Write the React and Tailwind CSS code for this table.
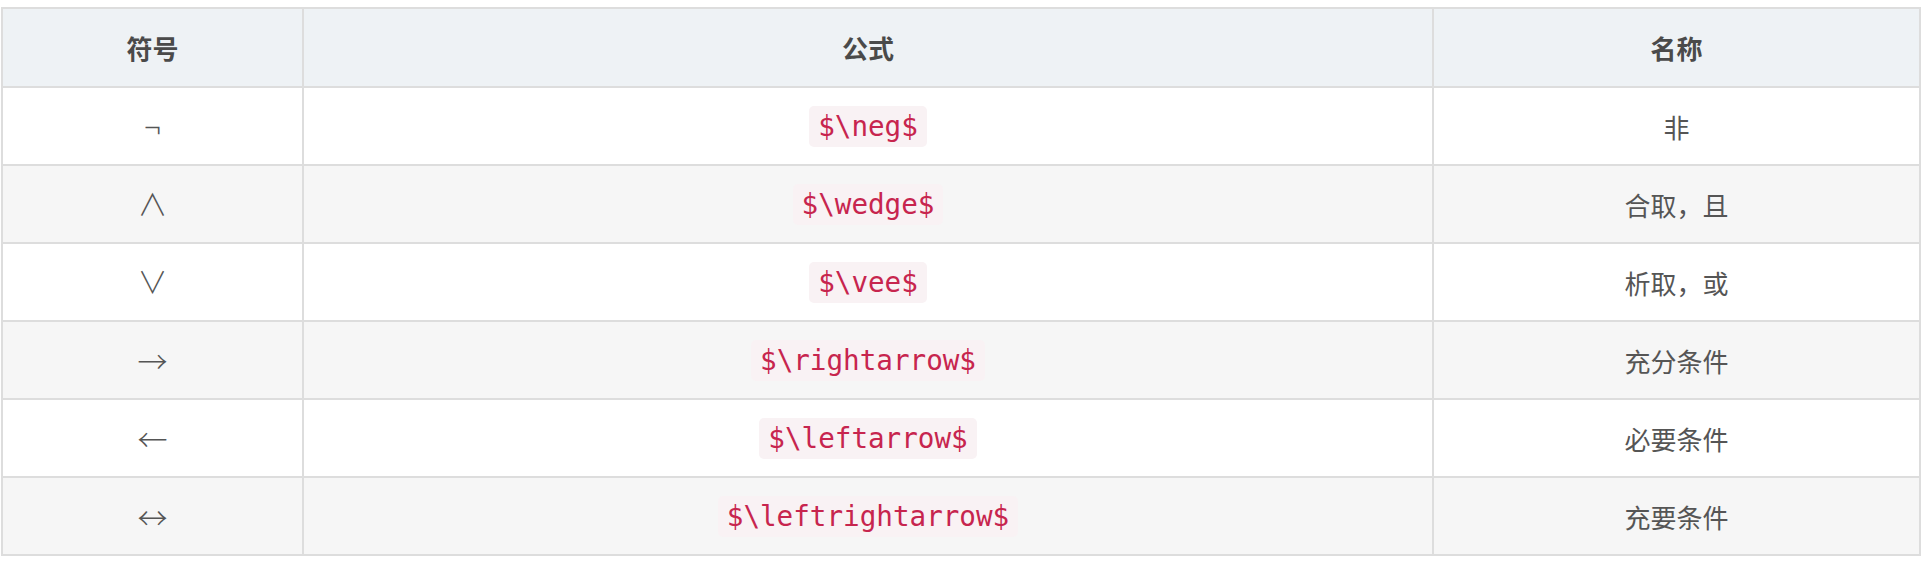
const rows = [
  { sym: "¬", tex: "$\\neg$", name: "非" },
  { sym: "∧", tex: "$\\wedge$", name: "合取，且" },
  { sym: "∨", tex: "$\\vee$", name: "析取，或" },
  { sym: "→", tex: "$\\rightarrow$", name: "充分条件", arrow: true },
  { sym: "←", tex: "$\\leftarrow$", name: "必要条件", arrow: true },
  { sym: "↔", tex: "$\\leftrightarrow$", name: "充要条件", arrow: true },
];

export default function App() {
  return (
    <div className="bg-white w-full h-[562px] pt-[7px] pl-[1px] font-['Noto_Sans_CJK_SC',sans-serif]">
      <table className="border-collapse w-[1920px] table-fixed">
        <thead>
          <tr className="h-[79px] bg-[#eef2f5]">
            <th className="w-[301px] border-2 border-[#dddddd] text-[26px] font-bold text-[#4a4a4a]">符号</th>
            <th className="w-[1130px] border-2 border-[#dddddd] text-[26px] font-bold text-[#4a4a4a]">公式</th>
            <th className="border-2 border-[#dddddd] text-[26px] font-bold text-[#4a4a4a]">名称</th>
          </tr>
        </thead>
        <tbody>
          {rows.map((r, i) => (
            <tr key={i} className={i % 2 === 1 ? "h-[78px] bg-[#f6f6f6]" : "h-[78px] bg-white"}>
              <td
                className={
                  r.arrow
                    ? "border-2 border-[#dddddd] text-center text-[30px] font-light text-[#555] font-['Noto_Sans_CJK_SC',sans-serif]"
                    : "border-2 border-[#dddddd] text-center text-[30px] font-light text-[#555] font-['Liberation_Serif','Noto_Sans_CJK_SC',serif]"
                }
              >
                {r.sym}
              </td>
              <td className="border-2 border-[#dddddd] text-center">
                <code className="inline-block px-[9px] py-[4px] rounded-[5px] bg-[#f9f2f4] text-[#c7254e] text-[27.6px] leading-[33px] font-['DejaVu_Sans_Mono',monospace]">
                  {r.tex}
                </code>
              </td>
              <td className="border-2 border-[#dddddd] text-center text-[26px] text-[#555]">{r.name}</td>
            </tr>
          ))}
        </tbody>
      </table>
    </div>
  );
}
